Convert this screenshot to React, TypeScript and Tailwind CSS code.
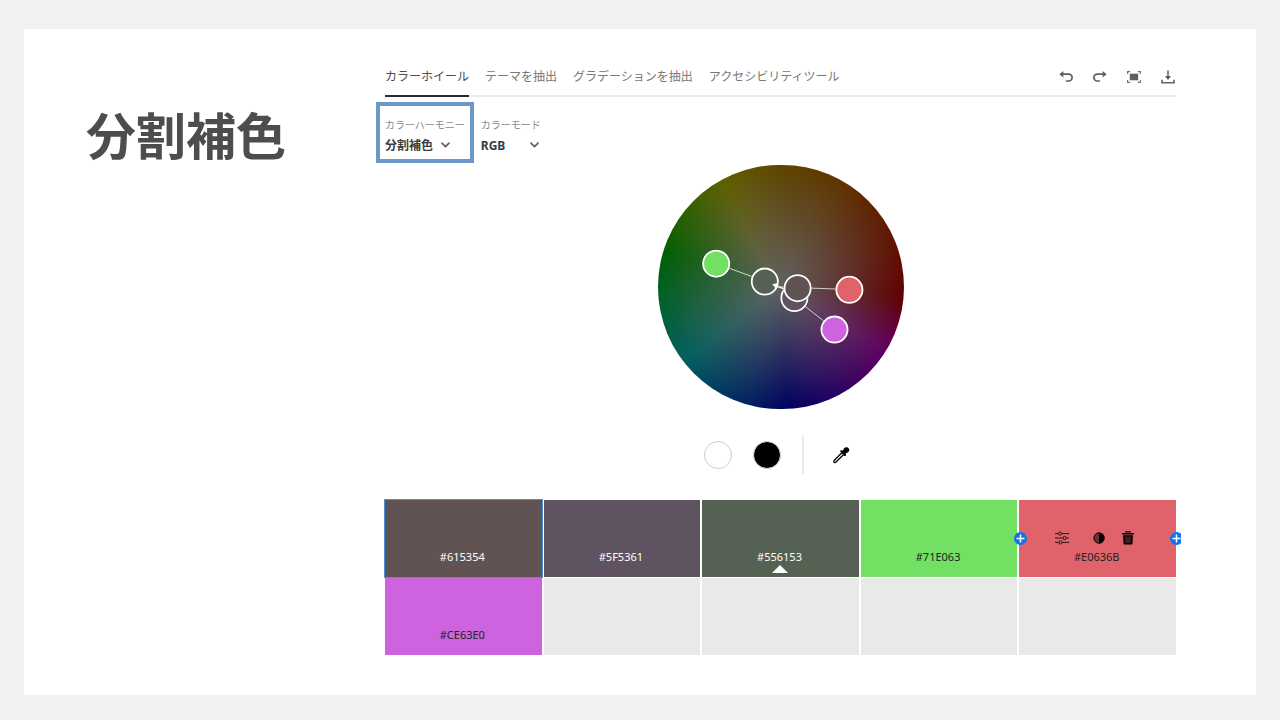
import { useState } from "react";

const TABS = [
  "カラーホイール",
  "テーマを抽出",
  "グラデーションを抽出",
  "アクセシビリティツール",
];

const SWATCHES = [
  { id: 1, hex: "#615354", bg: "bg-[#615354]", text: "text-white" },
  { id: 2, hex: "#5F5361", bg: "bg-[#5f5361]", text: "text-white" },
  { id: 3, hex: "#556153", bg: "bg-[#556153]", text: "text-white", base: true },
  { id: 4, hex: "#71E063", bg: "bg-[#71e063]", text: "text-[#222222]" },
  {
    id: 5,
    hex: "#E0636B",
    bg: "bg-[#e0636b]",
    text: "text-[#222222]",
    tools: true,
  },
  { id: 6, hex: "#CE63E0", bg: "bg-[#ce63e0]", text: "text-[#222222]" },
];

const EMPTY_SLOTS = [7, 8, 9, 10];

// Handle positions on the 246x244 wheel
const HANDLES = [
  { x: 58.2, y: 98.7, fill: "#71e063" },
  { x: 191.4, y: 124.8, fill: "#e0636b" },
  { x: 176.5, y: 164.6, fill: "#ce63e0" },
  { x: 106.8, y: 116.6, fill: "#556153" },
  { x: 136.4, y: 133, fill: "#5f5361" },
  { x: 139.6, y: 123.2, fill: "#615354" },
];

function UndoIcon({ flip = false }: { flip?: boolean }) {
  return (
    <svg
      className={`h-[14px] w-[14px] ${flip ? "-scale-x-100" : ""}`}
      viewBox="0 0 14 14"
      fill="none"
    >
      <path
        d="M3.5 4.2h6.200a2.900 2.900 0 0 1 0 6.800H7.600"
        stroke="#606060"
        strokeWidth="1.700"
        strokeLinecap="round"
      />
      <path d="M0.300 4.200 4.400 0.900v6.600z" fill="#606060" />
    </svg>
  );
}

function FullscreenIcon() {
  return (
    <svg className="h-[14px] w-[14px]" viewBox="0 0 14 14" fill="none">
      <path
        d="M.6 4V1.600h2.600M10.800 1.600h2.600V4M13.400 10v2.400h-2.600M3.200 12.400H.6V10"
        stroke="#707070"
        strokeWidth="1.100"
      />
      <rect x="2.800" y="3.700" width="8.400" height="6.600" fill="#606060" />
    </svg>
  );
}

function DownloadIcon() {
  return (
    <svg className="h-[14px] w-[14px]" viewBox="0 0 14 14" fill="none">
      <path d="M7 0.500v7" stroke="#606060" strokeWidth="1.500" />
      <path d="M3.900 6h6.200L7 10z" fill="#606060" />
      <path d="M1 9.800v3h12v-3" stroke="#606060" strokeWidth="1.600" />
    </svg>
  );
}

function Chevron() {
  return (
    <svg
      className="pointer-events-none absolute top-[9px] right-0 h-2 w-[11px]"
      viewBox="0 0 11 8"
      fill="none"
    >
      <path
        d="M2 2.200 5.500 5.700 9 2.200"
        stroke="#606060"
        strokeWidth="1.700"
        strokeLinecap="round"
        strokeLinejoin="round"
      />
    </svg>
  );
}

function EyedropperIcon() {
  return (
    <svg className="h-[18px] w-[18px]" viewBox="0 0 18 18" fill="none">
      <path
        d="M9.600 7 2.600 14c-.7.700-1 1.800-.6 2.300.5.500 1.600.200 2.300-.5L11.400 8.800"
        stroke="#000"
        strokeWidth="1.300"
        strokeLinejoin="round"
      />
      <path
        d="M8.300 5.800c-.4-.4.100-1.300.7-1.500.5-.1.900.1 1.300.4l1.200-1c.1-1.500 1.500-2.600 3.100-2.400 1.700.2 2.800 1.400 2.700 2.800-.1 1.400-1.100 2.500-2.500 2.700l-1.200 1c.5.700.600 1.200.3 1.700-.4.600-1.300.8-1.700.4z"
        fill="#000"
      />
    </svg>
  );
}

function SlidersIcon() {
  return (
    <svg
      className="h-[14px] w-[14px]"
      viewBox="0 0 14 14"
      fill="none"
      stroke="#2b1416"
      strokeWidth="1"
    >
      <path d="M0 2.600h3.200M6.600 2.600H14M0 7h7.900M11.300 7H14M0 11.400h3.900M7.300 11.400H14" />
      <circle cx="4.900" cy="2.600" r="1.600" />
      <circle cx="9.600" cy="7" r="1.600" />
      <circle cx="5.600" cy="11.400" r="1.600" />
    </svg>
  );
}

function ContrastIcon() {
  return (
    <svg className="h-[12px] w-[12px]" viewBox="0 0 12 12">
      <circle cx="6" cy="6" r="5.500" fill="#6e3035" />
      <path d="M6 .5a5.500 5.500 0 0 1 0 11z" fill="#000" />
      <circle cx="6" cy="6" r="5.100" fill="none" stroke="#1c0c0d" />
    </svg>
  );
}

function TrashIcon() {
  return (
    <svg className="h-[14px] w-[12px]" viewBox="0 0 12 14" fill="none">
      <path d="M4 2V.8h4V2" stroke="#000" strokeWidth="1.100" />
      <path d="M0 2h12v1.500H0z" fill="#000" />
      <path d="M1 4.300h10l-.6 9.300H1.600z" fill="#000" />
      <path
        d="M4 5.500l.2 6.500M6 5.500V12M8 5.500 7.800 12"
        stroke="#b04c53"
        strokeWidth=".7"
      />
    </svg>
  );
}

function PlusBadge() {
  return (
    <svg className="h-[13px] w-[13px] shrink-0" viewBox="0 0 13 13">
      <circle cx="6.500" cy="6.500" r="6.500" fill="#1473e6" />
      <path d="M6.500 2.500v8M2.500 6.500h8" stroke="#fff" strokeWidth="1.500" />
    </svg>
  );
}

function ColorWheel() {
  return (
    <div className="relative h-[244px] w-[246px] rounded-full bg-[radial-gradient(closest-side,#616161,#61616100),conic-gradient(#604300_0deg,#603300_30deg,#601a00_60deg,#600000_94deg,#600060_121deg,#000060_176deg,#006060_233deg,#006000_287deg,#606000_331deg,#604300_360deg)]">
      <svg
        className="absolute inset-0 h-full w-full"
        viewBox="0 0 246 244"
        role="img"
        aria-label="カラーホイール"
      >
        <g stroke="#fff" strokeOpacity=".75" strokeWidth="1">
          <path d="M123 122 58 98.500" />
          <path d="M123 122 191.300 124.500" />
          <path d="M123 122 176.300 164.500" />
        </g>
        {HANDLES.map((handle) => (
          <g key={handle.fill}>
            <circle
              cx={handle.x}
              cy={handle.y}
              r="14.500"
              fill="#000"
              fillOpacity=".2"
            />
            <circle
              cx={handle.x}
              cy={handle.y}
              r="13.100"
              fill={handle.fill}
              stroke="#fff"
              strokeWidth="1.800"
            />
          </g>
        ))}
        <path d="M119 121.500l6.500 2.300" stroke="#fff" strokeWidth="1.200" />
        <path d="M114.300 119.200l5.900-1.200-1.600 6.600z" fill="#fff" />
      </svg>
    </div>
  );
}

export default function App() {
  const [activeTab, setActiveTab] = useState(0);
  const [selected, setSelected] = useState(1);

  return (
    <div className="min-h-screen bg-[#f1f1f1] px-6 pt-[29px] pb-[25px] font-['Noto_Sans','Noto_Sans_CJK_JP',sans-serif]">
      <div className="flex bg-white pr-20 pb-10 pl-[62px]">
        <h1 className="w-[299px] shrink-0 pt-[74px] font-['Noto_Sans_CJK_JP',sans-serif] text-[50px] leading-[60px] font-bold text-[#4d4d4d]">
          分割補色
        </h1>

        <main className="min-w-0 flex-1 pt-7">
          {/* Tabs and toolbar */}
          <div className="flex h-10 items-stretch justify-between border-b-2 border-[#eaeaea]">
            <nav className="flex gap-4">
              {TABS.map((tab, index) => (
                <button
                  key={tab}
                  type="button"
                  onClick={() => setActiveTab(index)}
                  className={`-mb-[2px] border-b-2 pt-[2px] text-[12px] leading-4 whitespace-nowrap ${
                    index === activeTab
                      ? "border-[#2c2c2c] text-[#4b4b4b]"
                      : "border-transparent text-[#777777]"
                  }`}
                >
                  {tab}
                </button>
              ))}
            </nav>
            <div className="flex items-center gap-5 pt-[2px] pr-px">
              <button type="button" aria-label="元に戻す">
                <UndoIcon />
              </button>
              <button type="button" aria-label="やり直し">
                <UndoIcon flip />
              </button>
              <button type="button" aria-label="全画面">
                <FullscreenIcon />
              </button>
              <button type="button" aria-label="ダウンロード">
                <DownloadIcon />
              </button>
            </div>
          </div>

          {/* Harmony and colour mode */}
          <div className="mt-[5px] -ml-[9px] flex">
            <div className="border-4 border-[#6b97c9] px-[5px] pt-3 pb-[7px]">
              <label
                htmlFor="harmony"
                className="block text-[10px] leading-[14px] text-[#8a8a8a]"
              >
                カラーハーモニー
              </label>
              <div className="relative h-5 w-[66px]">
                <select
                  id="harmony"
                  className="h-5 w-full appearance-none bg-transparent text-[12px] leading-5 font-bold text-[#3c3c3c]"
                >
                  <option>分割補色</option>
                </select>
                <Chevron />
              </div>
            </div>
            <div className="ml-[7px] border-y-4 border-transparent pt-3 pb-[7px]">
              <label
                htmlFor="mode"
                className="block text-[10px] leading-[14px] text-[#8a8a8a]"
              >
                カラーモード
              </label>
              <div className="relative h-5 w-[59px]">
                <select
                  id="mode"
                  className="h-5 w-full appearance-none bg-transparent text-[12px] leading-5 font-bold text-[#3c3c3c]"
                >
                  <option>RGB</option>
                </select>
                <Chevron />
              </div>
            </div>
          </div>

          {/* Wheel */}
          <div className="mt-[2px] flex justify-center">
            <ColorWheel />
          </div>

          <div className="mt-[26px] flex items-center justify-center gap-[21px]">
            <button
              type="button"
              aria-label="白"
              className="h-7 w-7 rounded-full border border-[#cfcfcf] bg-white"
            />
            <button
              type="button"
              aria-label="黒"
              className="h-7 w-7 rounded-full border border-[#dddddd] bg-black"
            />
            <div className="h-[39px] w-[2px] bg-[#eaeaea]" />
            <button
              type="button"
              aria-label="スポイト"
              className="flex h-8 w-8 items-center justify-center"
            >
              <EyedropperIcon />
            </button>
          </div>

          {/* Swatches */}
          <div className="mt-[26px] grid grid-cols-5 gap-x-[2px] gap-y-px">
            {SWATCHES.map((swatch) => (
              <div
                key={swatch.id}
                onClick={() => setSelected(swatch.id)}
                className={`relative flex h-[77px] flex-col justify-end pb-3 ${swatch.bg} ${
                  swatch.id === selected ? "z-10 ring-1 ring-[#4a90e2]" : ""
                }`}
              >
                {swatch.tools && (
                  <>
                    <div className="flex h-[14px] items-center pl-9">
                      <button type="button" aria-label="調整">
                        <SlidersIcon />
                      </button>
                      <button
                        type="button"
                        aria-label="シェード"
                        className="ml-6"
                      >
                        <ContrastIcon />
                      </button>
                      <button
                        type="button"
                        aria-label="削除"
                        className="ml-[17px]"
                      >
                        <TrashIcon />
                      </button>
                    </div>
                    <button
                      type="button"
                      aria-label="左に追加"
                      className="absolute top-8 -left-[5px]"
                    >
                      <PlusBadge />
                    </button>
                    <button
                      type="button"
                      aria-label="右に追加"
                      className="absolute top-8 -right-[5px] flex w-[11px] overflow-hidden"
                    >
                      <PlusBadge />
                    </button>
                  </>
                )}
                <p
                  className={`mt-1 pr-[2px] text-center text-[11px] leading-4 ${swatch.text}`}
                >
                  {swatch.hex}
                </p>
                {swatch.base && (
                  <svg
                    className="absolute bottom-1 left-1/2 h-2 w-4 -translate-x-1/2"
                    viewBox="0 0 16 8"
                  >
                    <path d="M8 0l8 8H0z" fill="#fff" />
                  </svg>
                )}
              </div>
            ))}
            {EMPTY_SLOTS.map((slot) => (
              <div key={slot} className="h-[77px] bg-[#e9e9e9]" />
            ))}
          </div>
        </main>
      </div>
    </div>
  );
}
